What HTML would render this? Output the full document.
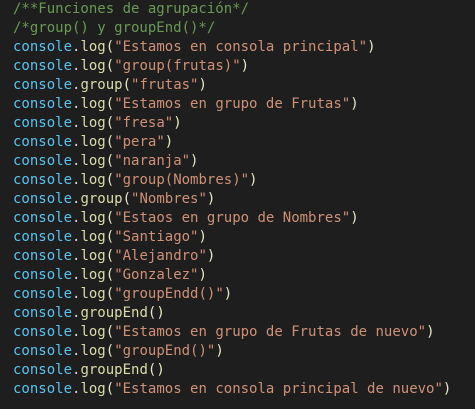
<html><head><style>
body{margin:0;background:#1e1e1e;width:475px;height:409px;overflow:hidden}
pre{margin:0;padding:0 0 0 13px;position:absolute;top:0;font-family:"DejaVu Sans Mono","Liberation Mono",monospace;font-size:14px;line-height:19px;color:#d4d4d4}
.c{color:#6a9955}.o{color:#5cc3f0}.m{color:#dcdcaa}.s{color:#ce9178}.p{color:#e8e8c8}
</style></head><body><pre><span class="c">/**Funciones de agrupación*/</span>
<span class="c">/*group() y groupEnd()*/</span>
<span class="o">console</span>.<span class="m">log</span><span class="p">(</span><span class="s">"Estamos en consola principal"</span><span class="p">)</span>
<span class="o">console</span>.<span class="m">log</span><span class="p">(</span><span class="s">"group(frutas)"</span><span class="p">)</span>
<span class="o">console</span>.<span class="m">group</span><span class="p">(</span><span class="s">"frutas"</span><span class="p">)</span>
<span class="o">console</span>.<span class="m">log</span><span class="p">(</span><span class="s">"Estamos en grupo de Frutas"</span><span class="p">)</span>
<span class="o">console</span>.<span class="m">log</span><span class="p">(</span><span class="s">"fresa"</span><span class="p">)</span>
<span class="o">console</span>.<span class="m">log</span><span class="p">(</span><span class="s">"pera"</span><span class="p">)</span>
<span class="o">console</span>.<span class="m">log</span><span class="p">(</span><span class="s">"naranja"</span><span class="p">)</span>
<span class="o">console</span>.<span class="m">log</span><span class="p">(</span><span class="s">"group(Nombres)"</span><span class="p">)</span>
<span class="o">console</span>.<span class="m">group</span><span class="p">(</span><span class="s">"Nombres"</span><span class="p">)</span>
<span class="o">console</span>.<span class="m">log</span><span class="p">(</span><span class="s">"Estaos en grupo de Nombres"</span><span class="p">)</span>
<span class="o">console</span>.<span class="m">log</span><span class="p">(</span><span class="s">"Santiago"</span><span class="p">)</span>
<span class="o">console</span>.<span class="m">log</span><span class="p">(</span><span class="s">"Alejandro"</span><span class="p">)</span>
<span class="o">console</span>.<span class="m">log</span><span class="p">(</span><span class="s">"Gonzalez"</span><span class="p">)</span>
<span class="o">console</span>.<span class="m">log</span><span class="p">(</span><span class="s">"groupEndd()"</span><span class="p">)</span>
<span class="o">console</span>.<span class="m">groupEnd</span><span class="p">()</span>
<span class="o">console</span>.<span class="m">log</span><span class="p">(</span><span class="s">"Estamos en grupo de Frutas de nuevo"</span><span class="p">)</span>
<span class="o">console</span>.<span class="m">log</span><span class="p">(</span><span class="s">"groupEnd()"</span><span class="p">)</span>
<span class="o">console</span>.<span class="m">groupEnd</span><span class="p">()</span>
<span class="o">console</span>.<span class="m">log</span><span class="p">(</span><span class="s">"Estamos en consola principal de nuevo"</span><span class="p">)</span></pre></body></html>
